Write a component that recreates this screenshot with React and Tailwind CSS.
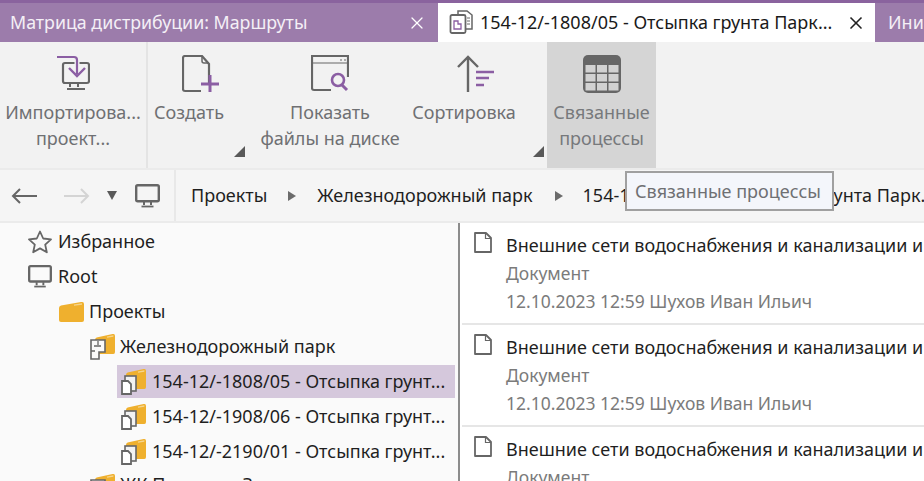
import React from "react";
import { X } from "lucide-react";

const gray = "#666666";
const purple = "#8b5ea3";

const MonitorIcon = ({ className }) => (
  <svg viewBox="0 0 25 24" className={className} fill="none">
    <rect x="1.200" y="1.200" width="22.600" height="16" rx="1.500" stroke={gray} strokeWidth="2.400" />
    <path d="M9 18v3M16 18v3" stroke={gray} strokeWidth="2" />
    <path d="M6.500 22.500h12" stroke={gray} strokeWidth="1.800" />
  </svg>
);

const Folder = ({ className }) => (
  <svg viewBox="0 0 25 20" preserveAspectRatio="none" className={className}>
    <path d="M0 6q0-2 2-2.500L22 0q3-.3 3 2v16q0 2-2 2H2q-2 0-2-2z" fill="#efb02e" />
    <path d="M15 2.500l8-1.300v1.600l-8 1z" fill="#f6d68f" />
  </svg>
);

const ProcessFolder = () => (
  <span className="relative block w-[25px] h-[26px] shrink-0">
    <Folder className="absolute right-0 top-0 w-[20px] h-[20px]" />
    <svg viewBox="0 0 16 20" className="absolute left-0 bottom-0 w-[16px] h-[20px]" fill="none">
      <rect x="4" y="1" width="11" height="15" fill="#f2f2f2" stroke={gray} strokeWidth="1.600" />
      <path d="M1 6h6l3 3v10H1z" fill="#ffffff" stroke={gray} strokeWidth="1.800" />
    </svg>
  </span>
);

const ParkFolder = () => (
  <span className="relative block w-[25px] h-[26px] shrink-0">
    <Folder className="absolute right-0 top-0 w-[20px] h-[20px]" />
    <svg viewBox="0 0 16 24" className="absolute left-0 bottom-0 w-[16px] h-[24px]" fill="none">
      <path d="M1 4h14v12H9v7H1z" fill="#fafafa" stroke={gray} strokeWidth="1.600" />
      <path d="M8 5v4M4 10h7M1 15h4" stroke={gray} strokeWidth="1.300" />
    </svg>
  </span>
);

const DocIcon = () => (
  <svg viewBox="0 0 18 21" className="w-[18px] h-[21px] shrink-0" fill="none">
    <path d="M1 1h11l5 5v14H1z" stroke={gray} strokeWidth="1.800" strokeLinejoin="round" />
    <path d="M11.500 1v5.500H17" stroke={gray} strokeWidth="1.200" />
  </svg>
);

const Corner = () => (
  <span className="absolute right-[3px] bottom-[11px] w-0 h-0 border-l-[11px] border-l-transparent border-b-[11px] border-b-[#595959]" />
);

const RibbonButton = ({ icon, lines, className, muted }) => (
  <div className={"flex flex-col items-center pt-[13px] " + className}>
    <div className="h-[38px] flex items-start justify-center">{icon}</div>
    <div className={"mt-[7px] text-center text-[18px] leading-[25.500px] whitespace-nowrap " + (muted ? "text-[#77797c]" : "text-[#6f7073]")}>
      {lines.map((l) => <div key={l}>{l}</div>)}
    </div>
  </div>
);

const TreeRow = ({ pad, icon, text, selected, textClass }) => (
  <div className={"h-[35px] flex items-center " + pad}>
    <div className={"flex items-center h-[33px] " + (selected ? "bg-[#d5c8dc] w-[338px] pl-[4px] -ml-[4px]" : "")}>
      {icon}
      <span className={"ml-[5px] text-[18px] text-[#1f1f1f] whitespace-nowrap " + (textClass || "")}>{text}</span>
    </div>
  </div>
);

const ListItem = () => (
  <div className="h-[102px] flex border-b-2 border-[#e6e6e6] ml-[2px] pl-[12px] pt-[8px] overflow-hidden shrink-0">
    <div className="pt-[1px]"><DocIcon /></div>
    <div className="ml-[14px] leading-[28px] whitespace-nowrap">
      <div className="text-[18px] text-[#1f1f1f]">Внешние сети водоснабжения и канализации и</div>
      <div className="text-[17.500px] text-[#7b7b7b]">Документ</div>
      <div className="text-[17.500px] text-[#7b7b7b]">12.10.2023 12:59 Шухов Иван Ильич</div>
    </div>
  </div>
);

export default function App() {
  return (
    <div className="relative w-[924px] h-[481px] overflow-hidden bg-[#fafafa] font-['Noto_Sans',sans-serif] flex flex-col">
      {/* tabs */}
      <div className="h-[42px] shrink-0 bg-[#9c7cab] border-t-[3px] border-[#8a639e] flex">
        <div className="w-[438px] flex items-center pl-[10px] pr-[11px] text-[17.800px]">
          <span className="flex-1 whitespace-nowrap text-[#f4eff6]">Матрица дистрибуции: Маршруты</span>
          <X size={20} strokeWidth={1.500} className="text-white" />
        </div>
        <div className="w-[437px] bg-white flex items-center pl-[11px] pr-[9px] text-[18px] text-[#1a1a1a]">
          <svg viewBox="0 0 25 25" className="w-[25px] h-[25px] shrink-0" fill="none">
            <path d="M9 4V1h9l5 4v14h-6" stroke={gray} strokeWidth="1.500" />
            <path d="M18 8h3M18 11h3M18 14h3" stroke={gray} strokeWidth="1" />
            <rect x="1.500" y="5" width="15" height="18" rx="1.500" fill="#ffffff" stroke={gray} strokeWidth="1.800" />
            <path d="M5 11h4v3h3v5H5z" stroke={purple} strokeWidth="1.300" />
          </svg>
          <span className="ml-[6px] flex-1 whitespace-nowrap">154-12/-1808/05 - Отсыпка грунта Парк...</span>
          <X size={20} strokeWidth={2} className="text-[#222]" />
        </div>
        <div className="ml-[1px] flex-1 pl-[12px] flex items-center text-[18px] text-[#f4eff6] whitespace-nowrap overflow-hidden">Инициация</div>
      </div>

      {/* ribbon */}
      <div className="h-[126px] shrink-0 bg-[#f2f2f2] flex">
        <RibbonButton
          className="w-[148px] border-r-2 border-[#e4e4e4]"
          lines={["Импортирова...", "проект..."]}
          icon={
            <svg viewBox="0 0 34 38" className="w-[34px] h-[38px]" fill="none">
              <rect x="7" y="8" width="26" height="20" rx="2" stroke={gray} strokeWidth="2.200" />
              <path d="M14 29v3M22 29v3M11 34h18" stroke={gray} strokeWidth="2" />
              <path d="M1 2h17q3 0 3 3v11" stroke="#f2f2f2" strokeWidth="5" />
              <path d="M1 2h17q3 0 3 3v14" stroke={purple} strokeWidth="2.200" />
              <path d="M13 13l8 8 8-8" stroke={purple} strokeWidth="2.400" />
            </svg>
          }
        />
        <div className="relative w-[100px]">
          <RibbonButton
            className="w-[82px]"
            lines={["Создать"]}
            icon={
              <svg viewBox="0 0 38 38" className="w-[38px] h-[38px] ml-[24px]" fill="none">
                <path d="M27 28V9l-7-8H3q-2 0-2 2v31q0 2 2 2h16" stroke={gray} strokeWidth="2.200" />
                <path d="M20 1v5q0 2 2 2h5" stroke={gray} strokeWidth="1.500" />
                <path d="M28 20v17M19 29h18" stroke={purple} strokeWidth="3" />
              </svg>
            }
          />
          <Corner />
        </div>
        <RibbonButton
          className="w-[164px]"
          lines={["Показать", "файлы на диске"]}
          icon={
            <svg viewBox="0 0 38 38" className="w-[38px] h-[38px]" fill="none">
              <path d="M1 1h36v34H3q-2 0-2-2z" stroke={gray} strokeWidth="2.200" />
              <path d="M1 8h36" stroke={gray} strokeWidth="1" />
              <path d="M29 5h2M33 5h2" stroke={gray} strokeWidth="1.200" />
              <rect x="20" y="22" width="18" height="15" fill="#f2f2f2" />
              <circle cx="27" cy="25" r="6" stroke={purple} strokeWidth="2.600" fill="#f2f2f2" />
              <path d="M31 30l5 5" stroke={purple} strokeWidth="3" />
            </svg>
          }
        />
        <div className="relative w-[135px]">
          <RibbonButton
            className="w-[104px]"
            lines={["Сортировка"]}
            icon={
              <svg viewBox="0 0 38 38" className="w-[38px] h-[38px] ml-[24px]" fill="none">
                <path d="M11 2v35" stroke={gray} strokeWidth="2.400" />
                <path d="M1 12L11 2l10 10" stroke={gray} strokeWidth="2.400" />
                <path d="M19 17h18M19 23h13M19 30h8" stroke={purple} strokeWidth="2.600" />
              </svg>
            }
          />
          <Corner />
        </div>
        <RibbonButton
          muted
          className="w-[109px] bg-[#d5d5d5]"
          lines={["Связанные", "процессы"]}
          icon={
            <svg viewBox="0 0 38 38" className="w-[38px] h-[38px]">
              <rect x="0" y="0" width="38" height="38" rx="5" fill="#666666" />
              <g fill="#d2d2d2">
                <rect x="2.500" y="10" width="10" height="7.500" />
                <rect x="14" y="10" width="10" height="7.500" />
                <rect x="25.500" y="10" width="10" height="7.500" />
                <rect x="2.500" y="19" width="10" height="7.500" />
                <rect x="14" y="19" width="10" height="7.500" />
                <rect x="25.500" y="19" width="10" height="7.500" />
                <rect x="2.500" y="28" width="10" height="7.500" />
                <rect x="14" y="28" width="10" height="7.500" />
                <rect x="25.500" y="28" width="10" height="7.500" />
              </g>
            </svg>
          }
        />
      </div>

      {/* navigation */}
      <div className="h-[55px] shrink-0 bg-[#f5f5f5] border-y-2 border-[#ebebeb] flex items-center">
        <div className="w-[176px] h-full border-r-2 border-[#e8e8e8] flex items-center pl-[11px] shrink-0">
          <svg viewBox="0 0 26 16" className="w-[26px] h-[16px]" fill="none">
            <path d="M26 8H2M9 1L2 8l7 7" stroke={gray} strokeWidth="2" />
          </svg>
          <svg viewBox="0 0 26 16" className="w-[26px] h-[16px] ml-[27px]" fill="none">
            <path d="M0 8h24M17 1l7 7-7 7" stroke="#d4d4d4" strokeWidth="2" />
          </svg>
          <span className="ml-[17px] w-0 h-0 border-x-[5px] border-x-transparent border-t-[9px] border-t-[#595959]" />
          <MonitorIcon className="ml-[18px] w-[25px] h-[24px]" />
        </div>
        <div className="flex items-center pl-[15px] text-[18px] text-[#1f1f1f] whitespace-nowrap">
          <span>Проекты</span>
          <span className="mx-[21px] w-0 h-0 border-y-[5px] border-y-transparent border-l-[8px] border-l-[#6b6b6b]" />
          <span className="mr-[2px]">Железнодорожный парк</span>
          <span className="mx-[20px] w-0 h-0 border-y-[5px] border-y-transparent border-l-[8px] border-l-[#6b6b6b]" />
          <span>154-12/-1808/05 - Отсыпка грунта Парк...</span>
        </div>
      </div>

      {/* content */}
      <div className="flex flex-1 min-h-0">
        <div className="w-[460px] shrink-0 border-r-2 border-[#8c8c8c] bg-[#fafafa] pt-[1px] overflow-hidden">
          <TreeRow pad="pl-[28px]" text="Избранное" icon={
            <svg viewBox="0 0 24 24" className="w-[24px] h-[24px] shrink-0 mr-[1px]" fill="none">
              <path d="M12 1.500l3.200 7 7.800.9-5.800 5.200 1.600 7.700L12 18.400l-6.800 3.900 1.600-7.700L1 9.400l7.800-.9z" stroke={gray} strokeWidth="1.800" strokeLinejoin="round" />
            </svg>
          } />
          <TreeRow pad="pl-[28px]" text="Root" icon={<MonitorIcon className="w-[24px] h-[23px] shrink-0 mr-[1px]" />} />
          <TreeRow pad="pl-[59px]" text="Проекты" icon={<Folder className="w-[25px] h-[20px] shrink-0" />} />
          <TreeRow pad="pl-[90px]" text="Железнодорожный парк" icon={<ParkFolder />} />
          <TreeRow pad="pl-[121px]" text="154-12/-1808/05 - Отсыпка грунт..." textClass="pl-[1px]" selected icon={<ProcessFolder />} />
          <TreeRow pad="pl-[121px]" text="154-12/-1908/06 - Отсыпка грунт..." textClass="pl-[1px]" icon={<ProcessFolder />} />
          <TreeRow pad="pl-[121px]" text="154-12/-2190/01 - Отсыпка грунт..." textClass="pl-[1px]" icon={<ProcessFolder />} />
          <TreeRow pad="pl-[90px]" text="ЖК Пражская Застава" textClass="-mt-[4px]" icon={<ParkFolder />} />
        </div>
        <div className="flex-1 min-w-0 bg-white flex flex-col overflow-hidden">
          <ListItem />
          <ListItem />
          <ListItem />
        </div>
      </div>

      {/* tooltip */}
      <div className="absolute left-[625px] top-[171px] w-[209px] h-[40px] bg-[#f4f6fb] border-2 border-[#a0a0a0] flex items-center pl-[8px] text-[18px] text-[#6f7073] whitespace-nowrap">
        Связанные процессы
      </div>
    </div>
  );
}
